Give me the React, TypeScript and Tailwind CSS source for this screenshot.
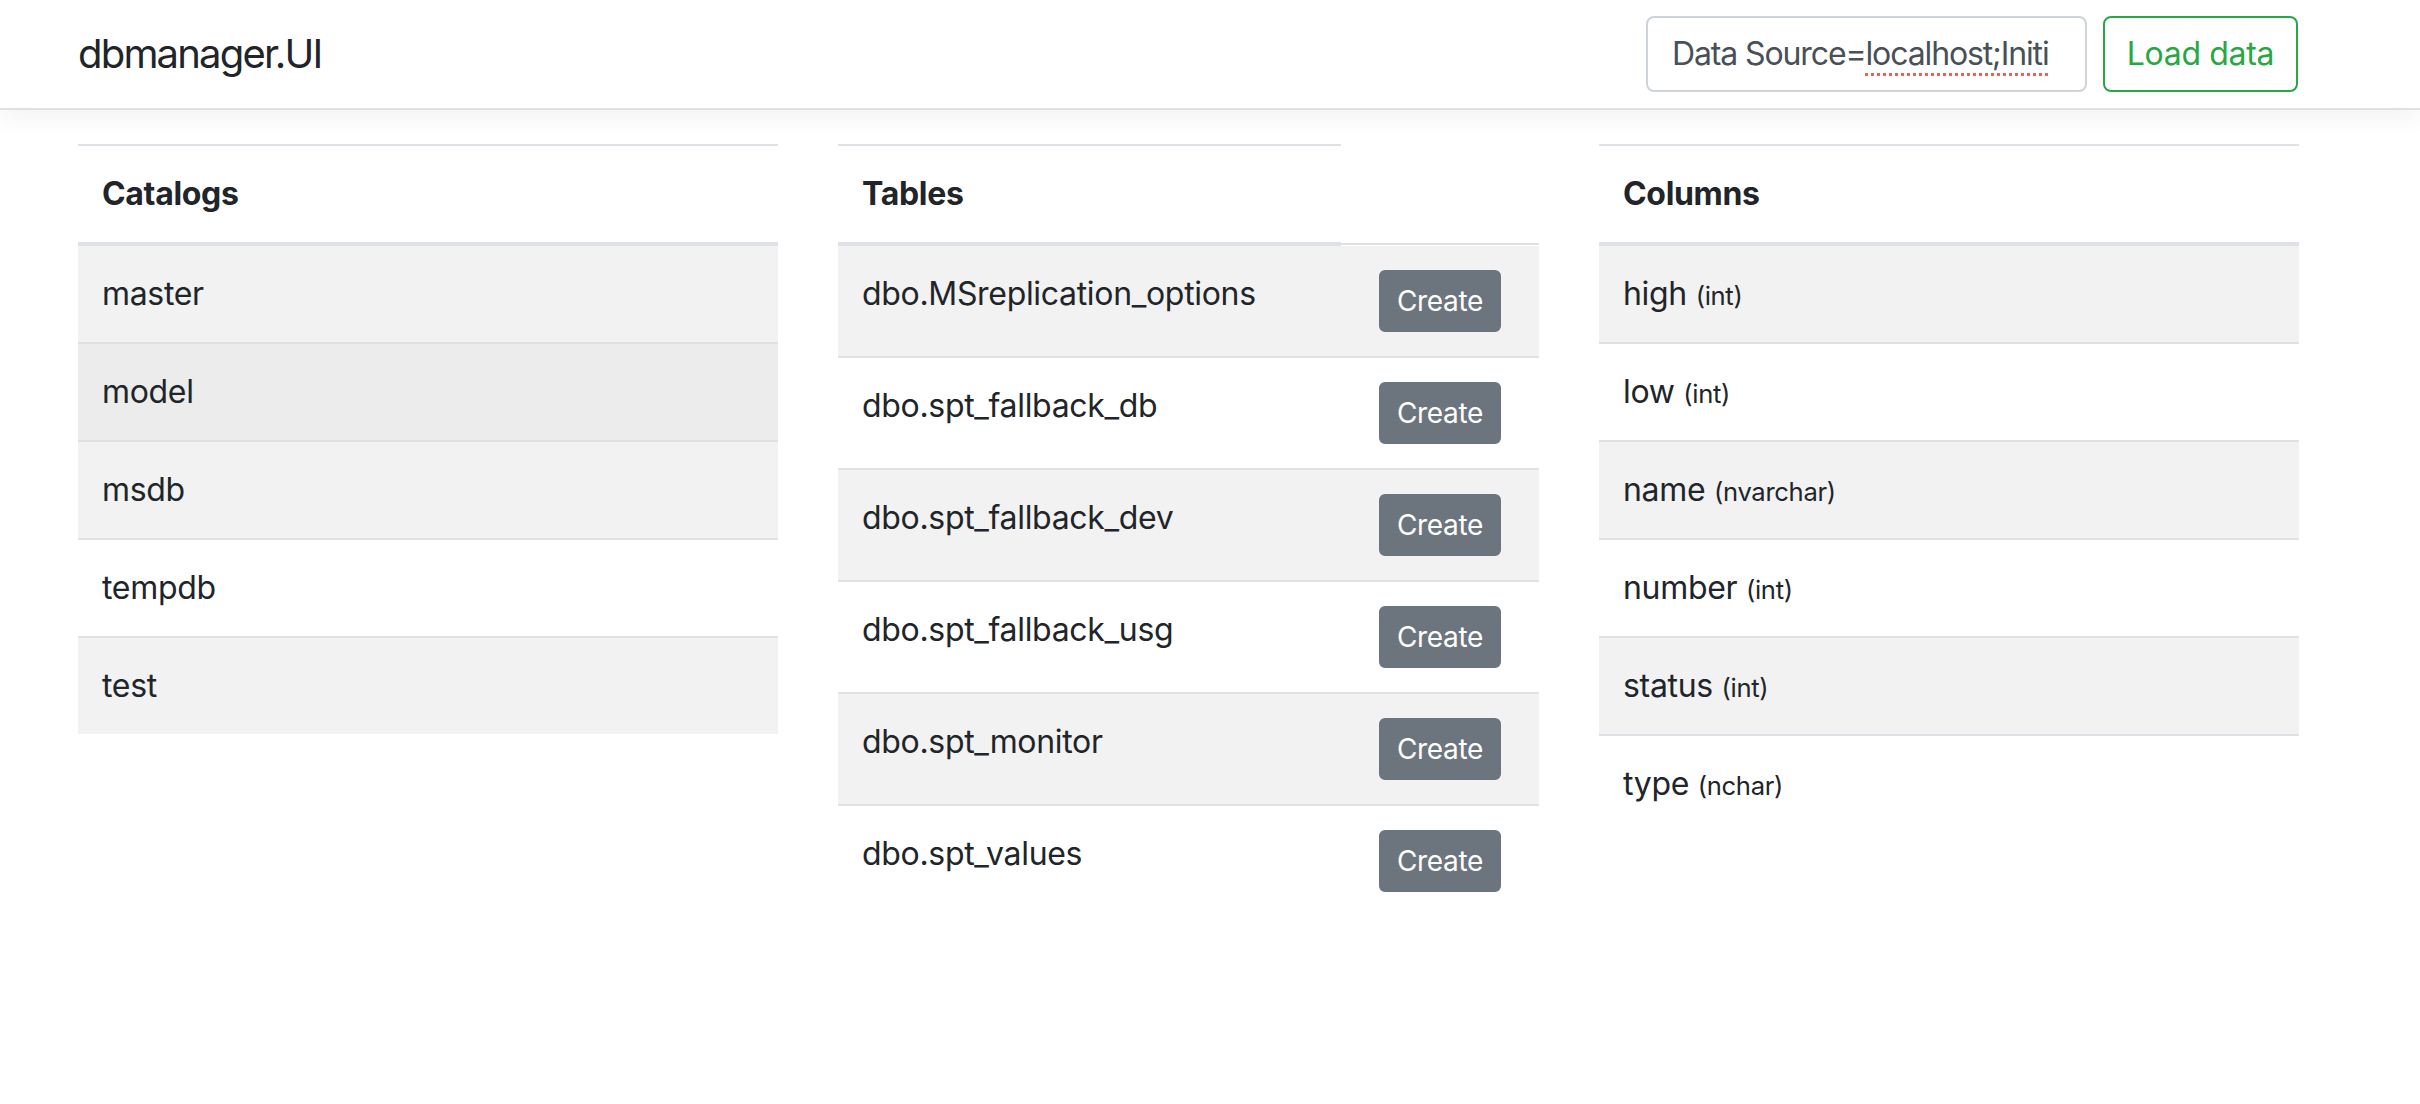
import React from 'react';

const catalogs = ['master', 'model', 'msdb', 'tempdb', 'test'];
const tables = [
  'dbo.MSreplication_options',
  'dbo.spt_fallback_db',
  'dbo.spt_fallback_dev',
  'dbo.spt_fallback_usg',
  'dbo.spt_monitor',
  'dbo.spt_values',
];
const columns = [
  { name: 'high', type: 'int' },
  { name: 'low', type: 'int' },
  { name: 'name', type: 'nvarchar' },
  { name: 'number', type: 'int' },
  { name: 'status', type: 'int' },
  { name: 'type', type: 'nchar' },
];

function rowBg(i: number, active = false) {
  if (active) return 'bg-[#ececec]';
  return i % 2 === 0 ? 'bg-[#f2f2f2]' : 'bg-white';
}

function HeaderRow({ title }: { title: string }) {
  return (
    <div className="border-t-2 border-b-4 border-[#dee2e6] p-[24px] text-[32px] leading-[48px] font-bold">
      {title}
    </div>
  );
}

export default function App() {
  return (
    <div className="min-h-screen bg-white text-[#212529] tracking-[-0.02em] font-['Inter','Liberation_Sans',sans-serif]">
      {/* Top navbar */}
      <nav className="relative z-10 h-[110px] bg-white border-b-2 border-[#dee2e6] shadow-[0_8px_24px_rgba(0,0,0,0.05)]">
        <div className="ml-[78px] w-[2220px] h-full flex items-center justify-between">
          <a href="#" className="text-[40px] leading-[60px] text-[#212529] tracking-[-0.045em]">
            dbmanager.UI
          </a>
          <div className="flex items-center gap-[16px]">
            <div className="w-[441px] h-[76px] border-2 border-[#ced4da] rounded-[8px] px-[24px] flex items-center bg-white">
              <div className="overflow-hidden whitespace-nowrap text-[32px] leading-[48px] text-[#495057] tracking-[-0.035em]">
                Data Source=
                <span className="underline decoration-dotted decoration-[#f0604f] decoration-[3px] underline-offset-[8px]">
                  localhost;Initi
                </span>
              </div>
            </div>
            <button className="w-[195px] h-[76px] border-2 border-[#28a745] rounded-[8px] text-[32px] leading-[48px] text-[#28a745] bg-white">
              Load data
            </button>
          </div>
        </div>
      </nav>

      <main className="ml-[78px] mt-[34px] flex gap-[60px] items-start">
        {/* Catalogs */}
        <div className="w-[700px]">
          <HeaderRow title="Catalogs" />
          {catalogs.map((c, i) => (
            <div
              key={c}
              className={`${rowBg(i, c === 'model')} ${i > 0 ? 'border-t-2 border-[#dee2e6]' : ''} p-[24px] text-[32px] leading-[48px]`}
            >
              {c}
            </div>
          ))}
        </div>

        {/* Tables */}
        <div className="w-[701px]">
          <div className="flex">
            <div className="w-[503px] border-t-2 border-b-4 border-[#dee2e6] p-[24px] text-[32px] leading-[48px] font-bold">
              Tables
            </div>
            <div className="flex-1 self-end h-[2px] mb-[1px] bg-[#dee2e6]" />
          </div>
          {tables.map((t, i) => (
            <div
              key={t}
              className={`${rowBg(i)} ${i > 0 ? 'border-t-2 border-[#dee2e6]' : ''} flex items-start`}
            >
              <div className="w-[503px] p-[24px] text-[32px] leading-[48px]">{t}</div>
              <div className="flex-1 p-[24px] flex justify-center">
                <button className="w-[122px] h-[62px] rounded-[6px] bg-[#6c757d] text-white text-[28px] leading-[42px] border-2 border-[#6c757d]">
                  Create
                </button>
              </div>
            </div>
          ))}
        </div>

        {/* Columns */}
        <div className="w-[700px]">
          <HeaderRow title="Columns" />
          {columns.map((c, i) => (
            <div
              key={c.name}
              className={`${rowBg(i)} ${i > 0 ? 'border-t-2 border-[#dee2e6]' : ''} p-[24px] text-[32px]`}
            >
              <div className="h-[48px] leading-[48px] overflow-hidden">
                {c.name} <small className="text-[25.6px] leading-none">({c.type})</small>
              </div>
            </div>
          ))}
        </div>
      </main>
    </div>
  );
}
